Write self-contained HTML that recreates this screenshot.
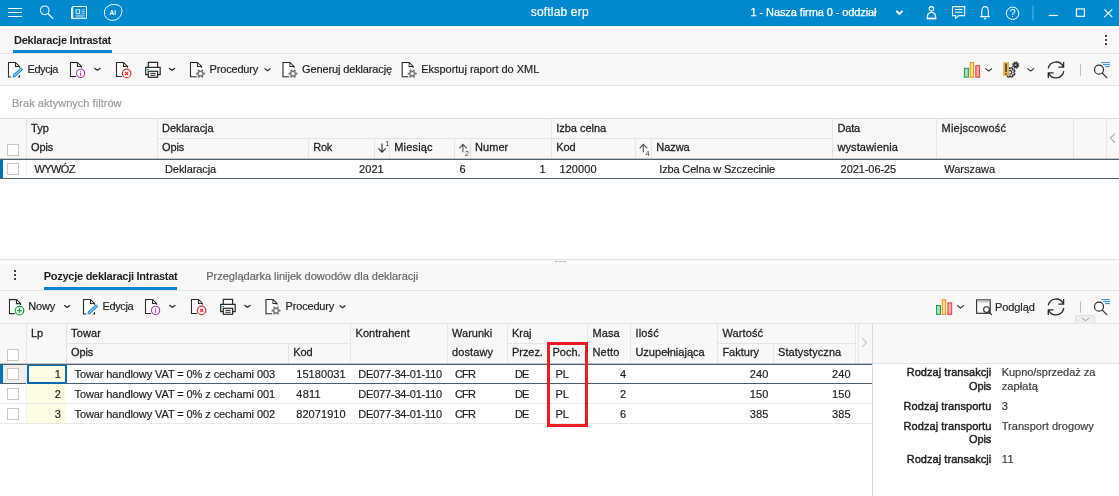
<!DOCTYPE html>
<html lang="pl"><head><meta charset="utf-8"><title>softlab erp</title>
<style>
html,body{margin:0;padding:0}
body{width:1119px;height:496px;overflow:hidden;background:#fff;position:relative;font-family:"Liberation Sans", sans-serif;color:#1e1e1e}
.b{position:absolute;box-sizing:border-box}
.t{position:absolute;white-space:pre;font-family:"Liberation Sans", sans-serif}
svg{position:absolute;overflow:visible}
.cb{position:absolute;box-sizing:border-box;width:12px;height:12px;border:1px solid #c6c6c6;background:#fff}
</style></head><body>
<div class="b" style="left:0px;top:0px;width:1119px;height:26px;background:#0089cf;"></div>
<div class="b" style="left:0px;top:26px;width:1119px;height:27px;background:#f9f8f7;"></div>
<div class="b" style="left:0px;top:53px;width:1119px;height:1px;background:#e4e3e2;"></div>
<div class="b" style="left:0px;top:54px;width:1119px;height:31px;background:#f9f8f7;"></div>
<div class="b" style="left:0px;top:85px;width:1119px;height:1px;background:#e4e3e2;"></div>
<div class="b" style="left:0px;top:118px;width:1119px;height:1px;background:#dddcdb;"></div>
<div class="b" style="left:0px;top:119px;width:1119px;height:39px;background:#f9f8f7;"></div>
<div class="b" style="left:13px;top:50px;width:99px;height:3px;background:#0a84d2;"></div>
<div class="b" style="left:1105px;top:35px;width:2px;height:2px;background:#444;"></div>
<div class="b" style="left:1105px;top:39px;width:2px;height:2px;background:#444;"></div>
<div class="b" style="left:1105px;top:43px;width:2px;height:2px;background:#444;"></div>
<div class="b" style="left:26px;top:119px;width:1px;height:39px;background:#e6e5e4;"></div>
<div class="b" style="left:157px;top:119px;width:1px;height:39px;background:#e6e5e4;"></div>
<div class="b" style="left:551px;top:119px;width:1px;height:39px;background:#e6e5e4;"></div>
<div class="b" style="left:832px;top:119px;width:1px;height:39px;background:#e6e5e4;"></div>
<div class="b" style="left:936px;top:119px;width:1px;height:39px;background:#e6e5e4;"></div>
<div class="b" style="left:1073px;top:119px;width:1px;height:39px;background:#e6e5e4;"></div>
<div class="b" style="left:1106px;top:119px;width:1px;height:39px;background:#e6e5e4;"></div>
<div class="b" style="left:308px;top:139px;width:1px;height:19px;background:#e6e5e4;"></div>
<div class="b" style="left:374px;top:139px;width:1px;height:19px;background:#e6e5e4;"></div>
<div class="b" style="left:389px;top:139px;width:1px;height:19px;background:#e6e5e4;"></div>
<div class="b" style="left:454px;top:139px;width:1px;height:19px;background:#e6e5e4;"></div>
<div class="b" style="left:470px;top:139px;width:1px;height:19px;background:#e6e5e4;"></div>
<div class="b" style="left:635px;top:139px;width:1px;height:19px;background:#e6e5e4;"></div>
<div class="b" style="left:651px;top:139px;width:1px;height:19px;background:#e6e5e4;"></div>
<div class="b" style="left:157px;top:138px;width:675px;height:1px;background:#e6e5e4;"></div>
<div class="cb" style="left:7px;top:144px"></div>
<div class="b" style="left:0px;top:158px;width:1119px;height:1px;background:#c3c7ca;"></div>
<div class="b" style="left:0px;top:159px;width:1119px;height:1px;background:#4b606c;"></div>
<div class="b" style="left:0px;top:178px;width:1119px;height:1px;background:#4b606c;"></div>
<div class="b" style="left:0px;top:160px;width:3px;height:18px;background:#0072b5;"></div>
<div class="b" style="left:26px;top:160px;width:1px;height:18px;background:#eeeeee;"></div>
<div class="cb" style="left:7px;top:163px"></div>
<div class="b" style="left:0px;top:259px;width:1119px;height:1px;background:#e4e3e2;"></div>
<div class="b" style="left:0px;top:260px;width:1119px;height:30px;background:#f9f8f7;"></div>
<div class="b" style="left:0px;top:290px;width:1119px;height:1px;background:#e4e3e2;"></div>
<div class="b" style="left:0px;top:291px;width:1119px;height:32px;background:#f9f8f7;"></div>
<div class="b" style="left:0px;top:323px;width:1119px;height:1px;background:#e4e3e2;"></div>
<div class="b" style="left:0px;top:324px;width:1119px;height:39px;background:#f9f8f7;"></div>
<div class="b" style="left:873px;top:363px;width:246px;height:1px;background:#e4e3e2;"></div>
<div class="b" style="left:872px;top:324px;width:1px;height:172px;background:#dcdbda;"></div>
<div class="b" style="left:858px;top:324px;width:1px;height:39px;background:#e6e5e4;"></div>
<div class="b" style="left:14px;top:270px;width:2px;height:2px;background:#444;"></div>
<div class="b" style="left:14px;top:274px;width:2px;height:2px;background:#444;"></div>
<div class="b" style="left:14px;top:278px;width:2px;height:2px;background:#444;"></div>
<div class="b" style="left:44px;top:287px;width:133px;height:3px;background:#0a84d2;"></div>
<div class="b" style="left:26px;top:324px;width:1px;height:39px;background:#e6e5e4;"></div>
<div class="b" style="left:66px;top:324px;width:1px;height:39px;background:#e6e5e4;"></div>
<div class="b" style="left:350px;top:324px;width:1px;height:39px;background:#e6e5e4;"></div>
<div class="b" style="left:447px;top:324px;width:1px;height:39px;background:#e6e5e4;"></div>
<div class="b" style="left:507px;top:324px;width:1px;height:39px;background:#e6e5e4;"></div>
<div class="b" style="left:587px;top:324px;width:1px;height:39px;background:#e6e5e4;"></div>
<div class="b" style="left:630px;top:324px;width:1px;height:39px;background:#e6e5e4;"></div>
<div class="b" style="left:717px;top:324px;width:1px;height:39px;background:#e6e5e4;"></div>
<div class="b" style="left:855px;top:324px;width:1px;height:39px;background:#e6e5e4;"></div>
<div class="b" style="left:288px;top:344px;width:1px;height:19px;background:#e6e5e4;"></div>
<div class="b" style="left:547px;top:344px;width:1px;height:19px;background:#e6e5e4;"></div>
<div class="b" style="left:773px;top:344px;width:1px;height:19px;background:#e6e5e4;"></div>
<div class="b" style="left:66px;top:343px;width:284px;height:1px;background:#e6e5e4;"></div>
<div class="b" style="left:507px;top:343px;width:80px;height:1px;background:#e6e5e4;"></div>
<div class="b" style="left:717px;top:343px;width:138px;height:1px;background:#e6e5e4;"></div>
<div class="cb" style="left:7px;top:349px"></div>
<div class="b" style="left:0px;top:363px;width:872px;height:1px;background:#c3c7ca;"></div>
<div class="b" style="left:0px;top:364px;width:872px;height:1px;background:#4b606c;"></div>
<div class="b" style="left:0px;top:383px;width:872px;height:1px;background:#4b606c;"></div>
<div class="b" style="left:0px;top:365px;width:3px;height:18px;background:#0072b5;"></div>
<div class="b" style="left:3px;top:365px;width:23px;height:18px;background:#efeeed;"></div>
<div class="b" style="left:27px;top:365px;width:40px;height:19px;background:#fdfde4;border:2px solid #0a6cb0;border-top-width:1px;"></div>
<div class="b" style="left:27px;top:384px;width:40px;height:19px;background:#fdfde4;"></div>
<div class="b" style="left:27px;top:404px;width:40px;height:19px;background:#fdfde4;"></div>
<div class="b" style="left:0px;top:403px;width:872px;height:1px;background:#e9e9e9;"></div>
<div class="b" style="left:0px;top:423px;width:872px;height:1px;background:#e9e9e9;"></div>
<div class="b" style="left:26px;top:365px;width:1px;height:58px;background:#eeeeee;"></div>
<div class="cb" style="left:7px;top:368px"></div>
<div class="cb" style="left:7px;top:388px"></div>
<div class="cb" style="left:7px;top:408px"></div>
<div class="b" style="left:547px;top:342px;width:41px;height:85px;border:3px solid #ec1c24;"></div>
<svg width="1119" height="496" viewBox="0 0 1119 496" style="left:0;top:0;will-change:transform"><path d="M8,8.5 H22" stroke="#fff" stroke-width="1"/>
<path d="M8,12.5 H22" stroke="#fff" stroke-width="1"/>
<path d="M8,16.5 H22" stroke="#fff" stroke-width="1"/>
<circle cx="44.7" cy="10.3" r="4.3" fill="none" stroke="#fff" stroke-width="1.1"/><path d="M47.8,13.5 L52.8,18.4" stroke="#fff" stroke-width="1.1" stroke-linecap="round"/>
<path d="M72.7,6.5 H86.5 V18.3 H71.5 V7.8 H72.7 M72.7,6.5 V18.3" fill="none" stroke="#fff" stroke-width="1"/>
<rect x="76" y="9.8" width="3.7" height="3.5" fill="none" stroke="#fff" stroke-width="0.8"/>
<path d="M81.4,9.9 h3.4 M81.4,11.6 h3.4 M81.4,13.3 h3.4 M75.6,15.25 h9.2 M75.6,16.85 h9.2" stroke="#fff" stroke-width="0.6"/>
<path d="M104.4,12.8 C104.2,7.8 108.5,4.6 113.6,4.5 C118.6,4.4 121.8,6.5 121.9,10.4 C122,15.6 118,20.4 112.6,20.4 C107.6,20.4 104.5,17.2 104.4,12.8 Z" fill="none" stroke="#fff" stroke-width="1"/>
<text x="112.8" y="14.6" text-anchor="middle" font-family="Liberation Sans, sans-serif" font-size="6.6" font-weight="700" fill="#fff">Ai</text>
<path d="M896.3,10.9 l3.1,3.1 l3.1,-3.1" fill="none" stroke="#fff" stroke-width="1.9" stroke-linejoin="miter"/>
<circle cx="931.4" cy="8.8" r="2.2" fill="none" stroke="#fff" stroke-width="1.1"/>
<path d="M927.2,18.2 C927.2,14.2 929,12.4 931.4,12.4 C933.8,12.4 935.8,14.2 935.8,18.2 Z" fill="none" stroke="#fff" stroke-width="1.1"/><path d="M926.8,18.6 H936.2" stroke="#fff" stroke-width="1.6"/>
<path d="M952.5,6.6 H964.7 V15.6 H958.8 L955.6,18.4 V15.6 H952.5 Z" fill="none" stroke="#fff" stroke-width="1.1" stroke-linejoin="miter"/><path d="M955,9.5 h7.4 M955,12.2 h7.4" stroke="#fff" stroke-width="1"/>
<path d="M980.2,16.6 H989.9 M981.8,16.6 V11.2 C981.8,8.2 983.2,6.6 985,6.6 C986.9,6.6 988.3,8.2 988.3,11.2 V16.6" fill="none" stroke="#fff" stroke-width="1.1"/><path d="M984.1,18.6 h1.9" stroke="#fff" stroke-width="1.1"/>
<circle cx="1012.6" cy="13.3" r="6.2" fill="none" stroke="#fff" stroke-width="1"/>
<text x="1012.6" y="17.1" text-anchor="middle" font-family="Liberation Sans, sans-serif" font-size="10.5" fill="#fff">?</text>
<path d="M1033,5.5 V20.5" stroke="#5cb5e3" stroke-width="1"/>
<path d="M1048.7,15.5 H1058" stroke="#fff" stroke-width="1.1"/>
<rect x="1076.4" y="8.9" width="8" height="7.4" fill="none" stroke="#fff" stroke-width="1.1"/>
<path d="M1104.3,9.4 l8,7.8 M1112.3,9.4 l-8,7.8" stroke="#fff" stroke-width="1.1"/>
<path d="M8.5,77.0 V62.5 H15.5 L19.5,66.5 V77.0 Z" fill="#fff"/>
<path d="M11.1,77.0 H8.5 V62.5 H15.5 L19.5,66.5 V67.7 M15.5,62.5 V66.5 H19.5 M17.8,77.0 H19.5 V75.0" fill="none" stroke="#2b2b2b" stroke-width="1.1"/>
<path d="M16.0,63.7 V66.0 H18.3 Z" fill="#e6e6e6"/>
<path d="M13.7,76.2 L22.1,68.4" stroke="#2a8fd8" stroke-width="3.3" stroke-linecap="butt"/>
<path d="M14.1,75.8 L21.7,68.8" stroke="#eaf4fc" stroke-width="0.8"/>
<path d="M12.4,77.6 l0.6,-2.6 l2.2,2.0 Z" fill="#2a8fd8"/>
<path d="M70.5,76.5 V62.5 H77.5 L81.5,66.5 V76.5 Z" fill="#fff"/>
<path d="M76.1,76.5 H70.5 V62.5 H77.5 L81.5,66.5 V67.8 M77.5,62.5 V66.5 H81.5" fill="none" stroke="#2b2b2b" stroke-width="1.1" stroke-linejoin="miter"/>
<path d="M78.0,63.7 V66.0 H80.3 Z" fill="#e6e6e6"/>
<circle cx="80.6" cy="73.4" r="4.1" fill="#fff" stroke="#a23aa8" stroke-width="1.1"/>
<path d="M80.6,72.5 V75.80000000000001" stroke="#a23aa8" stroke-width="1.1"/><circle cx="80.6" cy="71.30000000000001" r="0.65" fill="#a23aa8"/>
<path d="M94.85,68.44999999999999 l2.6,1.9 l2.6,-1.9" fill="none" stroke="#2b2b2b" stroke-width="1.25" stroke-linecap="round" stroke-linejoin="round"/>
<path d="M116.5,76.5 V62.5 H123.5 L127.5,66.5 V76.5 Z" fill="#fff"/>
<path d="M122.1,76.5 H116.5 V62.5 H123.5 L127.5,66.5 V67.8 M123.5,62.5 V66.5 H127.5" fill="none" stroke="#2b2b2b" stroke-width="1.1" stroke-linejoin="miter"/>
<path d="M124.0,63.7 V66.0 H126.3 Z" fill="#e6e6e6"/>
<circle cx="126.6" cy="73.4" r="4.2" fill="#fff" stroke="#e8333a" stroke-width="1.2"/>
<path d="M125.0,71.80000000000001 l3.2,3.2 M128.2,71.80000000000001 l-3.2,3.2" stroke="#e8333a" stroke-width="1.2"/>
<path d="M148.29999999999998,67.4 V62.4 H157.6 V67.4" fill="none" stroke="#2b2b2b" stroke-width="1.2"/>
<path d="M148.29999999999998,74.6 H145.7 V67.4 H160.2 V74.6 H157.6" fill="none" stroke="#2b2b2b" stroke-width="1.2"/>
<rect x="148.29999999999998" y="71.3" width="9.3" height="6" fill="none" stroke="#2b2b2b" stroke-width="1.2"/>
<path d="M150.39999999999998,73.4 h5.2 M150.39999999999998,75.3 h5.2" stroke="#2b2b2b" stroke-width="1"/>
<path d="M147.0,69.5 h1.9" stroke="#1a86d8" stroke-width="1.1"/>
<path d="M169.45000000000002,68.44999999999999 l2.6,1.9 l2.6,-1.9" fill="none" stroke="#2b2b2b" stroke-width="1.25" stroke-linecap="round" stroke-linejoin="round"/>
<path d="M190.5,76.7 V62.5 H197.5 L201.5,66.5 V76.7 Z" fill="#fff"/>
<path d="M196.7,76.7 H190.5 V62.5 H197.5 L201.5,66.5 V67.8 M197.5,62.5 V66.5 H201.5" fill="none" stroke="#2b2b2b" stroke-width="1.1" stroke-linejoin="miter"/>
<path d="M198.0,63.7 V66.0 H200.3 Z" fill="#e6e6e6"/>
<circle cx="200.5" cy="73.6" r="3.6" fill="#f9f8f7"/>
<polygon points="203.17,72.47 204.85,72.94 204.85,74.26 203.17,74.73 202.81,75.35 203.24,77.04 202.11,77.70 200.86,76.48 200.14,76.48 198.89,77.70 197.76,77.04 198.19,75.35 197.83,74.73 196.15,74.26 196.15,72.94 197.83,72.47 198.19,71.85 197.76,70.16 198.89,69.50 200.14,70.72 200.86,70.72 202.11,69.50 203.24,70.16 202.81,71.85" fill="#7b7b7b" stroke="#7b7b7b" stroke-width="0.3" stroke-linejoin="round"/>
<circle cx="200.5" cy="73.6" r="1.65" fill="#fff"/>
<path d="M264.95,68.75 l2.6,1.9 l2.6,-1.9" fill="none" stroke="#2b2b2b" stroke-width="1.25" stroke-linecap="round" stroke-linejoin="round"/>
<path d="M283,76.7 V62.5 H290 L294,66.5 V76.7 Z" fill="#fff"/>
<path d="M289.2,76.7 H283 V62.5 H290 L294,66.5 V67.8 M290,62.5 V66.5 H294" fill="none" stroke="#2b2b2b" stroke-width="1.1" stroke-linejoin="miter"/>
<path d="M290.5,63.7 V66.0 H292.8 Z" fill="#e6e6e6"/>
<circle cx="293.0" cy="73.6" r="3.6" fill="#f9f8f7"/>
<polygon points="295.67,72.47 297.35,72.94 297.35,74.26 295.67,74.73 295.31,75.35 295.74,77.04 294.61,77.70 293.36,76.48 292.64,76.48 291.39,77.70 290.26,77.04 290.69,75.35 290.33,74.73 288.65,74.26 288.65,72.94 290.33,72.47 290.69,71.85 290.26,70.16 291.39,69.50 292.64,70.72 293.36,70.72 294.61,69.50 295.74,70.16 295.31,71.85" fill="#7b7b7b" stroke="#7b7b7b" stroke-width="0.3" stroke-linejoin="round"/>
<circle cx="293.0" cy="73.6" r="1.65" fill="#fff"/>
<path d="M402.2,76.7 V62.5 H409.2 L413.2,66.5 V76.7 Z" fill="#fff"/>
<path d="M408.4,76.7 H402.2 V62.5 H409.2 L413.2,66.5 V67.8 M409.2,62.5 V66.5 H413.2" fill="none" stroke="#2b2b2b" stroke-width="1.1" stroke-linejoin="miter"/>
<path d="M409.7,63.7 V66.0 H412.0 Z" fill="#e6e6e6"/>
<circle cx="412.2" cy="73.6" r="3.6" fill="#f9f8f7"/>
<polygon points="414.87,72.47 416.55,72.94 416.55,74.26 414.87,74.73 414.51,75.35 414.94,77.04 413.81,77.70 412.56,76.48 411.84,76.48 410.59,77.70 409.46,77.04 409.89,75.35 409.53,74.73 407.85,74.26 407.85,72.94 409.53,72.47 409.89,71.85 409.46,70.16 410.59,69.50 411.84,70.72 412.56,70.72 413.81,69.50 414.94,70.16 414.51,71.85" fill="#7b7b7b" stroke="#7b7b7b" stroke-width="0.3" stroke-linejoin="round"/>
<circle cx="412.2" cy="73.6" r="1.65" fill="#fff"/>
<rect x="964.4" y="68.3" width="4" height="8.900000000000002" fill="#a8dcb2" stroke="#1fa04a" stroke-width="1"/>
<rect x="970.1999999999999" y="62.6" width="3.4" height="14.600000000000001" fill="#fbe48a" stroke="#f08a2a" stroke-width="1"/>
<rect x="975.8" y="65.7" width="3.8" height="11.500000000000002" fill="#f6aaaa" stroke="#e83a3a" stroke-width="1"/>
<path d="M985.65,68.55 l3.0,2.5 l3.0,-2.5" fill="none" stroke="#2b2b2b" stroke-width="1.1" stroke-linecap="round" stroke-linejoin="round"/>
<polygon points="1017.98,65.42 1019.02,65.84 1018.58,66.91 1017.54,66.47 1017.08,66.94 1017.52,67.97 1016.46,68.41 1016.03,67.38 1015.38,67.38 1014.96,68.42 1013.89,67.98 1014.33,66.94 1013.86,66.48 1012.83,66.92 1012.39,65.86 1013.42,65.43 1013.42,64.78 1012.38,64.36 1012.82,63.29 1013.86,63.73 1014.32,63.26 1013.88,62.23 1014.94,61.79 1015.37,62.82 1016.02,62.82 1016.44,61.78 1017.51,62.22 1017.07,63.26 1017.54,63.72 1018.57,63.28 1019.01,64.34 1017.98,64.77" fill="#333" stroke="#333" stroke-width="0.5" stroke-linejoin="round"/>
<circle cx="1015.7" cy="65.1" r="1.0" fill="#f9f8f7" stroke="#333" stroke-width="0.5"/>
<polygon points="1013.78,72.82 1014.99,73.44 1014.31,75.10 1013.01,74.68 1012.40,75.30 1012.82,76.59 1011.17,77.28 1010.54,76.07 1009.68,76.08 1009.06,77.29 1007.40,76.61 1007.82,75.31 1007.20,74.70 1005.91,75.12 1005.22,73.47 1006.43,72.84 1006.42,71.98 1005.21,71.36 1005.89,69.70 1007.19,70.12 1007.80,69.50 1007.38,68.21 1009.03,67.52 1009.66,68.73 1010.52,68.72 1011.14,67.51 1012.80,68.19 1012.38,69.49 1013.00,70.10 1014.29,69.68 1014.98,71.33 1013.77,71.96" fill="#f9f8f7" stroke="#2e2e2e" stroke-width="1.15" stroke-linejoin="round"/>
<circle cx="1010.1" cy="72.4" r="1.8" fill="#f9f8f7" stroke="#2e2e2e" stroke-width="1.15"/>
<rect x="1003" y="62.1" width="6" height="13.6" fill="#e9b552"/>
<path d="M1006,63.5 V72" stroke="#333" stroke-width="1.5"/><rect x="1005.25" y="73.2" width="1.5" height="1.5" fill="#333"/>
<path d="M1027.6499999999999,68.55 l3.0,2.5 l3.0,-2.5" fill="none" stroke="#2b2b2b" stroke-width="1.1" stroke-linecap="round" stroke-linejoin="round"/>
<path d="M1048.25,68.5 A7.9,7.9 0 0 1 1063.45,67.2 M1063.6,62.10000000000001 V67.2 H1058.4" fill="none" stroke="#2b2b2b" stroke-width="1.3"/>
<path d="M1063.75,71.10000000000001 A7.9,7.9 0 0 1 1048.55,72.80000000000001 M1048.3,77.9 V72.80000000000001 H1053.5" fill="none" stroke="#2b2b2b" stroke-width="1.3"/>
<path d="M1080.5,64.3 V75.7" stroke="#bcbcbc" stroke-width="1"/>
<circle cx="1099" cy="69.7" r="4.5" fill="none" stroke="#2b2b2b" stroke-width="1.2"/>
<path d="M1102.3,73.10000000000001 L1106.8,77.7" stroke="#2b2b2b" stroke-width="1.2" stroke-linecap="round"/>
<path d="M1101.1,62.6 H1109.9" stroke="#2a8fd8" stroke-width="1"/>
<path d="M1103.2,64.6 H1109.9" stroke="#2a8fd8" stroke-width="1"/>
<path d="M1105.1,66.6 H1109.9" stroke="#2a8fd8" stroke-width="1"/>
<path d="M9.5,313.6 V299.6 H16.5 L20.5,303.6 V313.6 Z" fill="#fff"/>
<path d="M14.7,313.6 H9.5 V299.6 H16.5 L20.5,303.6 V304.90000000000003 M16.5,299.6 V303.6 H20.5" fill="none" stroke="#2b2b2b" stroke-width="1.1" stroke-linejoin="miter"/>
<path d="M17.0,300.8 V303.1 H19.3 Z" fill="#e6e6e6"/>
<circle cx="19.5" cy="310.6" r="4.3" fill="#fff" stroke="#1fa74a" stroke-width="1.2"/>
<path d="M17.1,310.6 h4.8 M19.5,308.20000000000005 v4.8" stroke="#1fa74a" stroke-width="1.2"/>
<path d="M64.55,305.55 l2.6,1.9 l2.6,-1.9" fill="none" stroke="#2b2b2b" stroke-width="1.25" stroke-linecap="round" stroke-linejoin="round"/>
<path d="M83.5,314.0 V299.5 H90.5 L94.5,303.5 V314.0 Z" fill="#fff"/>
<path d="M86.1,314.0 H83.5 V299.5 H90.5 L94.5,303.5 V304.7 M90.5,299.5 V303.5 H94.5 M92.8,314.0 H94.5 V312.0" fill="none" stroke="#2b2b2b" stroke-width="1.1"/>
<path d="M91.0,300.7 V303.0 H93.3 Z" fill="#e6e6e6"/>
<path d="M88.7,313.2 L97.1,305.4" stroke="#2a8fd8" stroke-width="3.3" stroke-linecap="butt"/>
<path d="M89.1,312.8 L96.7,305.8" stroke="#eaf4fc" stroke-width="0.8"/>
<path d="M87.4,314.6 l0.6,-2.6 l2.2,2.0 Z" fill="#2a8fd8"/>
<path d="M145.5,313.5 V299.5 H152.5 L156.5,303.5 V313.5 Z" fill="#fff"/>
<path d="M151.1,313.5 H145.5 V299.5 H152.5 L156.5,303.5 V304.8 M152.5,299.5 V303.5 H156.5" fill="none" stroke="#2b2b2b" stroke-width="1.1" stroke-linejoin="miter"/>
<path d="M153.0,300.7 V303.0 H155.3 Z" fill="#e6e6e6"/>
<circle cx="155.6" cy="310.4" r="4.1" fill="#fff" stroke="#a23aa8" stroke-width="1.1"/>
<path d="M155.6,309.5 V312.79999999999995" stroke="#a23aa8" stroke-width="1.1"/><circle cx="155.6" cy="308.29999999999995" r="0.65" fill="#a23aa8"/>
<path d="M169.75,305.45000000000005 l2.6,1.9 l2.6,-1.9" fill="none" stroke="#2b2b2b" stroke-width="1.25" stroke-linecap="round" stroke-linejoin="round"/>
<path d="M191.5,313.5 V299.5 H198.5 L202.5,303.5 V313.5 Z" fill="#fff"/>
<path d="M197.1,313.5 H191.5 V299.5 H198.5 L202.5,303.5 V304.8 M198.5,299.5 V303.5 H202.5" fill="none" stroke="#2b2b2b" stroke-width="1.1" stroke-linejoin="miter"/>
<path d="M199.0,300.7 V303.0 H201.3 Z" fill="#e6e6e6"/>
<circle cx="201.6" cy="310.4" r="4.2" fill="#fff" stroke="#e8333a" stroke-width="1.2"/>
<path d="M200.0,308.79999999999995 l3.2,3.2 M203.2,308.79999999999995 l-3.2,3.2" stroke="#e8333a" stroke-width="1.2"/>
<path d="M223.29999999999998,304.4 V299.4 H232.6 V304.4" fill="none" stroke="#2b2b2b" stroke-width="1.2"/>
<path d="M223.29999999999998,311.59999999999997 H220.7 V304.4 H235.2 V311.59999999999997 H232.6" fill="none" stroke="#2b2b2b" stroke-width="1.2"/>
<rect x="223.29999999999998" y="308.29999999999995" width="9.3" height="6" fill="none" stroke="#2b2b2b" stroke-width="1.2"/>
<path d="M225.39999999999998,310.4 h5.2 M225.39999999999998,312.29999999999995 h5.2" stroke="#2b2b2b" stroke-width="1"/>
<path d="M222.0,306.5 h1.9" stroke="#1a86d8" stroke-width="1.1"/>
<path d="M244.85000000000002,305.45000000000005 l2.6,1.9 l2.6,-1.9" fill="none" stroke="#2b2b2b" stroke-width="1.25" stroke-linecap="round" stroke-linejoin="round"/>
<path d="M266,313.7 V299.5 H273 L277,303.5 V313.7 Z" fill="#fff"/>
<path d="M272.2,313.7 H266 V299.5 H273 L277,303.5 V304.8 M273,299.5 V303.5 H277" fill="none" stroke="#2b2b2b" stroke-width="1.1" stroke-linejoin="miter"/>
<path d="M273.5,300.7 V303.0 H275.8 Z" fill="#e6e6e6"/>
<circle cx="276.0" cy="310.6" r="3.6" fill="#f9f8f7"/>
<polygon points="278.67,309.47 280.35,309.94 280.35,311.26 278.67,311.73 278.31,312.35 278.74,314.04 277.61,314.70 276.36,313.48 275.64,313.48 274.39,314.70 273.26,314.04 273.69,312.35 273.33,311.73 271.65,311.26 271.65,309.94 273.33,309.47 273.69,308.85 273.26,307.16 274.39,306.50 275.64,307.72 276.36,307.72 277.61,306.50 278.74,307.16 278.31,308.85" fill="#7b7b7b" stroke="#7b7b7b" stroke-width="0.3" stroke-linejoin="round"/>
<circle cx="276.0" cy="310.6" r="1.65" fill="#fff"/>
<path d="M339.95,305.75 l2.6,1.9 l2.6,-1.9" fill="none" stroke="#2b2b2b" stroke-width="1.25" stroke-linecap="round" stroke-linejoin="round"/>
<rect x="936.5" y="305.5" width="4" height="8.900000000000023" fill="#a8dcb2" stroke="#1fa04a" stroke-width="1"/>
<rect x="942.3" y="299.8" width="3.4" height="14.600000000000023" fill="#fbe48a" stroke="#f08a2a" stroke-width="1"/>
<rect x="947.9" y="302.90000000000003" width="3.8" height="11.500000000000023" fill="#f6aaaa" stroke="#e83a3a" stroke-width="1"/>
<path d="M957.55,305.55 l3.0,2.5 l3.0,-2.5" fill="none" stroke="#2b2b2b" stroke-width="1.1" stroke-linecap="round" stroke-linejoin="round"/>
<rect x="976.6" y="299.9" width="13.6" height="13.4" fill="none" stroke="#2b2b2b" stroke-width="1.1"/><rect x="977.2" y="300.5" width="12.4" height="1.9" fill="#c9c9c9"/>
<circle cx="986.5" cy="309.6" r="2.9" fill="#f9f8f7" stroke="#2b2b2b" stroke-width="1.1"/><path d="M988.6,311.8 L991.6,314.6" stroke="#2b2b2b" stroke-width="1.2" stroke-linecap="round"/>
<path d="M1048.25,305.5 A7.9,7.9 0 0 1 1063.45,304.2 M1063.6,299.09999999999997 V304.2 H1058.4" fill="none" stroke="#2b2b2b" stroke-width="1.3"/>
<path d="M1063.75,308.09999999999997 A7.9,7.9 0 0 1 1048.55,309.79999999999995 M1048.3,314.9 V309.79999999999995 H1053.5" fill="none" stroke="#2b2b2b" stroke-width="1.3"/>
<path d="M1080.5,301.3 V312.7" stroke="#bcbcbc" stroke-width="1"/>
<circle cx="1099" cy="306.7" r="4.5" fill="none" stroke="#2b2b2b" stroke-width="1.2"/>
<path d="M1102.3,310.09999999999997 L1106.8,314.7" stroke="#2b2b2b" stroke-width="1.2" stroke-linecap="round"/>
<path d="M1101.1,299.59999999999997 H1109.9" stroke="#2a8fd8" stroke-width="1"/>
<path d="M1103.2,301.59999999999997 H1109.9" stroke="#2a8fd8" stroke-width="1"/>
<path d="M1105.1,303.59999999999997 H1109.9" stroke="#2a8fd8" stroke-width="1"/>
<path d="M1075.5,323.5 V317 Q1075.5,315.5 1077,315.5 H1093 Q1094.5,315.5 1094.5,317 V323.5" fill="#efefef" stroke="#dcdcdc" stroke-width="1"/>
<path d="M1082.05,318.15000000000003 l3.5,2.6 l3.5,-2.6" fill="none" stroke="#999" stroke-width="1.0" stroke-linecap="round" stroke-linejoin="round"/>
<path d="M382,143.4 V152.20000000000002 M378.4,148.3 L382,152.20000000000002 L385.7,148.3" fill="none" stroke="#333" stroke-width="1.1"/>
<text x="385.3" y="145.8" font-family="Liberation Sans, sans-serif" font-size="7.2" fill="#333">1</text>
<path d="M462.9,144.4 V152.20000000000002 M459.29999999999995,148.3 L462.9,144.4 L466.79999999999995,148.3" fill="none" stroke="#555" stroke-width="1.1"/>
<text x="465.09999999999997" y="155.5" font-family="Liberation Sans, sans-serif" font-size="7.2" fill="#333">2</text>
<path d="M643.3,144.4 V152.20000000000002 M639.6999999999999,148.3 L643.3,144.4 L647.1999999999999,148.3" fill="none" stroke="#555" stroke-width="1.1"/>
<text x="645.5" y="155.5" font-family="Liberation Sans, sans-serif" font-size="7.2" fill="#333">4</text>
<path d="M1115,133.6 L1110.3,138.1 L1115,142.6" fill="none" stroke="#adadad" stroke-width="1.1"/>
<path d="M862.3,338.4 L866.6,342.5 L862.3,346.6" fill="none" stroke="#c4c4c4" stroke-width="1.1"/>
<rect x="555" y="261" width="3" height="1" fill="#b8b8b8"/>
<rect x="559" y="261" width="3" height="1" fill="#b8b8b8"/>
<rect x="563" y="261" width="3" height="1" fill="#b8b8b8"/></svg>
<div id="txt" style="position:absolute;left:0;top:0;width:1119px;height:496px;will-change:transform">
<span class="t" style="left:530.75px;top:5.34px;font-size:12px;line-height:15px;color:#fff;letter-spacing:0.178px;-webkit-text-stroke:0.18px currentColor;">softlab erp</span>
<span class="t" style="left:750.50px;top:4.69px;font-size:11px;line-height:14px;color:#fff;letter-spacing:-0.089px;-webkit-text-stroke:0.25px currentColor;">1 - Nasza firma 0 - oddział</span>
<span class="t" style="left:14.00px;top:33.19px;font-size:11px;line-height:14px;font-weight:700;letter-spacing:-0.225px;">Deklaracje Intrastat</span>
<span class="t" style="left:27.50px;top:61.69px;font-size:11px;line-height:14px;letter-spacing:-0.422px;-webkit-text-stroke:0.18px currentColor;">Edycja</span>
<span class="t" style="left:209.60px;top:61.69px;font-size:11px;line-height:14px;letter-spacing:-0.182px;-webkit-text-stroke:0.18px currentColor;">Procedury</span>
<span class="t" style="left:302.00px;top:61.69px;font-size:11px;line-height:14px;letter-spacing:-0.13px;-webkit-text-stroke:0.18px currentColor;">Generuj deklarację</span>
<span class="t" style="left:421.25px;top:61.69px;font-size:11px;line-height:14px;letter-spacing:-0.027px;-webkit-text-stroke:0.18px currentColor;">Eksportuj raport do XML</span>
<span class="t" style="left:12.00px;top:95.69px;font-size:11px;line-height:14px;color:#9a9a9a;letter-spacing:0.035px;-webkit-text-stroke:0.18px currentColor;">Brak aktywnych filtrów</span>
<span class="t" style="left:31.00px;top:121.19px;font-size:11px;line-height:14px;letter-spacing:0.047px;-webkit-text-stroke:0.26px currentColor;">Typ</span>
<span class="t" style="left:31.00px;top:139.94px;font-size:11px;line-height:14px;letter-spacing:-0.098px;-webkit-text-stroke:0.26px currentColor;">Opis</span>
<span class="t" style="left:162.00px;top:121.19px;font-size:11px;line-height:14px;letter-spacing:-0.036px;-webkit-text-stroke:0.26px currentColor;">Deklaracja</span>
<span class="t" style="left:162.00px;top:139.94px;font-size:11px;line-height:14px;letter-spacing:-0.098px;-webkit-text-stroke:0.26px currentColor;">Opis</span>
<span class="t" style="left:313.25px;top:139.94px;font-size:11px;line-height:14px;letter-spacing:-0.219px;-webkit-text-stroke:0.26px currentColor;">Rok</span>
<span class="t" style="left:394.25px;top:139.94px;font-size:11px;line-height:14px;letter-spacing:0.165px;-webkit-text-stroke:0.26px currentColor;">Miesiąc</span>
<span class="t" style="left:475.00px;top:139.94px;font-size:11px;line-height:14px;letter-spacing:0.056px;-webkit-text-stroke:0.26px currentColor;">Numer</span>
<span class="t" style="left:556.25px;top:121.19px;font-size:11px;line-height:14px;letter-spacing:-0.017px;-webkit-text-stroke:0.26px currentColor;">Izba celna</span>
<span class="t" style="left:556.25px;top:139.94px;font-size:11px;line-height:14px;letter-spacing:-0.109px;-webkit-text-stroke:0.26px currentColor;">Kod</span>
<span class="t" style="left:656.25px;top:139.94px;font-size:11px;line-height:14px;letter-spacing:-0.05px;-webkit-text-stroke:0.26px currentColor;">Nazwa</span>
<span class="t" style="left:837.40px;top:121.19px;font-size:11px;line-height:14px;letter-spacing:-0.133px;-webkit-text-stroke:0.26px currentColor;">Data</span>
<span class="t" style="left:837.40px;top:139.94px;font-size:11px;line-height:14px;letter-spacing:0.111px;-webkit-text-stroke:0.26px currentColor;">wystawienia</span>
<span class="t" style="left:941.60px;top:121.19px;font-size:11px;line-height:14px;letter-spacing:0.197px;-webkit-text-stroke:0.26px currentColor;">Miejscowość</span>
<span class="t" style="left:34.50px;top:161.94px;font-size:11px;line-height:14px;letter-spacing:-0.625px;-webkit-text-stroke:0.18px currentColor;">WYWÓZ</span>
<span class="t" style="left:165.00px;top:161.94px;font-size:11px;line-height:14px;letter-spacing:-0.081px;-webkit-text-stroke:0.18px currentColor;">Deklaracja</span>
<span class="t" style="left:359.08px;top:161.94px;font-size:11px;line-height:14px;letter-spacing:0.062px;-webkit-text-stroke:0.18px currentColor;">2021</span>
<span class="t" style="left:459.38px;top:161.94px;font-size:11px;line-height:14px;letter-spacing:0.062px;-webkit-text-stroke:0.18px currentColor;">6</span>
<span class="t" style="left:539.38px;top:161.94px;font-size:11px;line-height:14px;letter-spacing:0.062px;-webkit-text-stroke:0.18px currentColor;">1</span>
<span class="t" style="left:559.50px;top:161.94px;font-size:11px;line-height:14px;letter-spacing:0.062px;-webkit-text-stroke:0.18px currentColor;">120000</span>
<span class="t" style="left:659.25px;top:161.94px;font-size:11px;line-height:14px;letter-spacing:-0.151px;-webkit-text-stroke:0.18px currentColor;">Izba Celna w Szczecinie</span>
<span class="t" style="left:840.60px;top:161.94px;font-size:11px;line-height:14px;letter-spacing:-0.073px;-webkit-text-stroke:0.18px currentColor;">2021-06-25</span>
<span class="t" style="left:944.30px;top:161.94px;font-size:11px;line-height:14px;letter-spacing:-0.033px;-webkit-text-stroke:0.18px currentColor;">Warszawa</span>
<span class="t" style="left:43.75px;top:268.69px;font-size:11px;line-height:14px;font-weight:700;letter-spacing:-0.267px;">Pozycje deklaracji Intrastat</span>
<span class="t" style="left:206.25px;top:268.69px;font-size:11px;line-height:14px;color:#666;letter-spacing:-0.004px;-webkit-text-stroke:0.18px currentColor;">Przeglądarka linijek dowodów dla deklaracji</span>
<span class="t" style="left:28.25px;top:299.19px;font-size:11px;line-height:14px;letter-spacing:-0.191px;-webkit-text-stroke:0.18px currentColor;">Nowy</span>
<span class="t" style="left:102.50px;top:299.19px;font-size:11px;line-height:14px;letter-spacing:-0.38px;-webkit-text-stroke:0.18px currentColor;">Edycja</span>
<span class="t" style="left:285.60px;top:299.19px;font-size:11px;line-height:14px;letter-spacing:-0.182px;-webkit-text-stroke:0.18px currentColor;">Procedury</span>
<span class="t" style="left:995.00px;top:299.79px;font-size:11px;line-height:14px;letter-spacing:-0.096px;-webkit-text-stroke:0.18px currentColor;">Podgląd</span>
<span class="t" style="left:31.00px;top:325.94px;font-size:11px;line-height:14px;letter-spacing:-0.062px;-webkit-text-stroke:0.26px currentColor;">Lp</span>
<span class="t" style="left:71.00px;top:325.94px;font-size:11px;line-height:14px;letter-spacing:0.169px;-webkit-text-stroke:0.26px currentColor;">Towar</span>
<span class="t" style="left:71.00px;top:345.19px;font-size:11px;line-height:14px;letter-spacing:-0.098px;-webkit-text-stroke:0.26px currentColor;">Opis</span>
<span class="t" style="left:293.25px;top:345.19px;font-size:11px;line-height:14px;letter-spacing:-0.109px;-webkit-text-stroke:0.26px currentColor;">Kod</span>
<span class="t" style="left:355.50px;top:325.94px;font-size:11px;line-height:14px;letter-spacing:0.042px;-webkit-text-stroke:0.26px currentColor;">Kontrahent</span>
<span class="t" style="left:452.00px;top:325.94px;font-size:11px;line-height:14px;letter-spacing:0.025px;-webkit-text-stroke:0.26px currentColor;">Warunki</span>
<span class="t" style="left:452.00px;top:345.19px;font-size:11px;line-height:14px;letter-spacing:0.127px;-webkit-text-stroke:0.26px currentColor;">dostawy</span>
<span class="t" style="left:512.00px;top:325.94px;font-size:11px;line-height:14px;letter-spacing:-0.055px;-webkit-text-stroke:0.26px currentColor;">Kraj</span>
<span class="t" style="left:512.00px;top:345.19px;font-size:11px;line-height:14px;letter-spacing:-0.057px;-webkit-text-stroke:0.26px currentColor;">Przez.</span>
<span class="t" style="left:552.50px;top:345.19px;font-size:11px;line-height:14px;letter-spacing:-0.006px;-webkit-text-stroke:0.26px currentColor;">Poch.</span>
<span class="t" style="left:592.50px;top:325.94px;font-size:11px;line-height:14px;letter-spacing:0.059px;-webkit-text-stroke:0.26px currentColor;">Masa</span>
<span class="t" style="left:592.50px;top:345.19px;font-size:11px;line-height:14px;letter-spacing:0.169px;-webkit-text-stroke:0.26px currentColor;">Netto</span>
<span class="t" style="left:635.40px;top:325.94px;font-size:11px;line-height:14px;letter-spacing:0.191px;-webkit-text-stroke:0.26px currentColor;">Ilość</span>
<span class="t" style="left:635.40px;top:345.19px;font-size:11px;line-height:14px;letter-spacing:0.018px;-webkit-text-stroke:0.26px currentColor;">Uzupełniająca</span>
<span class="t" style="left:722.40px;top:325.94px;font-size:11px;line-height:14px;letter-spacing:0.121px;-webkit-text-stroke:0.26px currentColor;">Wartość</span>
<span class="t" style="left:722.40px;top:345.19px;font-size:11px;line-height:14px;letter-spacing:0.002px;-webkit-text-stroke:0.26px currentColor;">Faktury</span>
<span class="t" style="left:778.00px;top:345.19px;font-size:11px;line-height:14px;letter-spacing:0.077px;-webkit-text-stroke:0.26px currentColor;">Statystyczna</span>
<span class="t" style="left:54.77px;top:366.94px;font-size:11px;line-height:14px;letter-spacing:0.062px;-webkit-text-stroke:0.18px currentColor;">1</span>
<span class="t" style="left:74.50px;top:366.94px;font-size:11px;line-height:14px;letter-spacing:-0.092px;-webkit-text-stroke:0.18px currentColor;">Towar handlowy VAT = 0% z cechami 003</span>
<span class="t" style="left:296.25px;top:366.94px;font-size:11px;line-height:14px;letter-spacing:0.064px;-webkit-text-stroke:0.18px currentColor;">15180031</span>
<span class="t" style="left:358.25px;top:366.94px;font-size:11px;line-height:14px;letter-spacing:-0.193px;-webkit-text-stroke:0.18px currentColor;">DE077-34-01-110</span>
<span class="t" style="left:455.00px;top:366.94px;font-size:11px;line-height:14px;letter-spacing:-0.859px;-webkit-text-stroke:0.18px currentColor;">CFR</span>
<span class="t" style="left:515.00px;top:366.94px;font-size:11px;line-height:14px;letter-spacing:-0.898px;-webkit-text-stroke:0.18px currentColor;">DE</span>
<span class="t" style="left:555.60px;top:366.94px;font-size:11px;line-height:14px;letter-spacing:-0.297px;-webkit-text-stroke:0.18px currentColor;">PL</span>
<span class="t" style="left:619.88px;top:366.94px;font-size:11px;line-height:14px;letter-spacing:0.062px;-webkit-text-stroke:0.18px currentColor;">4</span>
<span class="t" style="left:749.82px;top:366.94px;font-size:11px;line-height:14px;letter-spacing:0.062px;-webkit-text-stroke:0.18px currentColor;">240</span>
<span class="t" style="left:832.12px;top:366.94px;font-size:11px;line-height:14px;letter-spacing:0.062px;-webkit-text-stroke:0.18px currentColor;">240</span>
<span class="t" style="left:54.77px;top:386.94px;font-size:11px;line-height:14px;letter-spacing:0.062px;-webkit-text-stroke:0.18px currentColor;">2</span>
<span class="t" style="left:74.50px;top:386.94px;font-size:11px;line-height:14px;letter-spacing:-0.092px;-webkit-text-stroke:0.18px currentColor;">Towar handlowy VAT = 0% z cechami 001</span>
<span class="t" style="left:296.25px;top:386.94px;font-size:11px;line-height:14px;letter-spacing:0.27px;-webkit-text-stroke:0.18px currentColor;">4811</span>
<span class="t" style="left:358.25px;top:386.94px;font-size:11px;line-height:14px;letter-spacing:-0.193px;-webkit-text-stroke:0.18px currentColor;">DE077-34-01-110</span>
<span class="t" style="left:455.00px;top:386.94px;font-size:11px;line-height:14px;letter-spacing:-0.859px;-webkit-text-stroke:0.18px currentColor;">CFR</span>
<span class="t" style="left:515.00px;top:386.94px;font-size:11px;line-height:14px;letter-spacing:-0.898px;-webkit-text-stroke:0.18px currentColor;">DE</span>
<span class="t" style="left:555.60px;top:386.94px;font-size:11px;line-height:14px;letter-spacing:-0.297px;-webkit-text-stroke:0.18px currentColor;">PL</span>
<span class="t" style="left:619.88px;top:386.94px;font-size:11px;line-height:14px;letter-spacing:0.062px;-webkit-text-stroke:0.18px currentColor;">2</span>
<span class="t" style="left:749.82px;top:386.94px;font-size:11px;line-height:14px;letter-spacing:0.062px;-webkit-text-stroke:0.18px currentColor;">150</span>
<span class="t" style="left:832.12px;top:386.94px;font-size:11px;line-height:14px;letter-spacing:0.062px;-webkit-text-stroke:0.18px currentColor;">150</span>
<span class="t" style="left:54.77px;top:406.94px;font-size:11px;line-height:14px;letter-spacing:0.062px;-webkit-text-stroke:0.18px currentColor;">3</span>
<span class="t" style="left:74.50px;top:406.94px;font-size:11px;line-height:14px;letter-spacing:-0.092px;-webkit-text-stroke:0.18px currentColor;">Towar handlowy VAT = 0% z cechami 002</span>
<span class="t" style="left:296.25px;top:406.94px;font-size:11px;line-height:14px;letter-spacing:0.064px;-webkit-text-stroke:0.18px currentColor;">82071910</span>
<span class="t" style="left:358.25px;top:406.94px;font-size:11px;line-height:14px;letter-spacing:-0.193px;-webkit-text-stroke:0.18px currentColor;">DE077-34-01-110</span>
<span class="t" style="left:455.00px;top:406.94px;font-size:11px;line-height:14px;letter-spacing:-0.859px;-webkit-text-stroke:0.18px currentColor;">CFR</span>
<span class="t" style="left:515.00px;top:406.94px;font-size:11px;line-height:14px;letter-spacing:-0.898px;-webkit-text-stroke:0.18px currentColor;">DE</span>
<span class="t" style="left:555.60px;top:406.94px;font-size:11px;line-height:14px;letter-spacing:-0.297px;-webkit-text-stroke:0.18px currentColor;">PL</span>
<span class="t" style="left:619.88px;top:406.94px;font-size:11px;line-height:14px;letter-spacing:0.062px;-webkit-text-stroke:0.18px currentColor;">6</span>
<span class="t" style="left:749.82px;top:406.94px;font-size:11px;line-height:14px;letter-spacing:0.062px;-webkit-text-stroke:0.18px currentColor;">385</span>
<span class="t" style="left:832.12px;top:406.94px;font-size:11px;line-height:14px;letter-spacing:0.062px;-webkit-text-stroke:0.18px currentColor;">385</span>
<span class="t" style="left:906.65px;top:364.99px;font-size:11px;line-height:14px;letter-spacing:0.055px;-webkit-text-stroke:0.42px currentColor;">Rodzaj transakcji</span>
<span class="t" style="left:968.97px;top:378.59px;font-size:11px;line-height:14px;letter-spacing:-0.098px;-webkit-text-stroke:0.42px currentColor;">Opis</span>
<span class="t" style="left:1001.70px;top:364.99px;font-size:11px;line-height:14px;color:#3a3a3a;letter-spacing:-0.034px;-webkit-text-stroke:0.18px currentColor;">Kupno/sprzedaż za</span>
<span class="t" style="left:1001.70px;top:378.59px;font-size:11px;line-height:14px;color:#3a3a3a;letter-spacing:0.098px;-webkit-text-stroke:0.18px currentColor;">zapłatą</span>
<span class="t" style="left:903.59px;top:398.89px;font-size:11px;line-height:14px;letter-spacing:0.055px;-webkit-text-stroke:0.42px currentColor;">Rodzaj transportu</span>
<span class="t" style="left:1001.70px;top:398.89px;font-size:11px;line-height:14px;color:#3a3a3a;letter-spacing:0.062px;-webkit-text-stroke:0.18px currentColor;">3</span>
<span class="t" style="left:903.59px;top:418.99px;font-size:11px;line-height:14px;letter-spacing:0.055px;-webkit-text-stroke:0.42px currentColor;">Rodzaj transportu</span>
<span class="t" style="left:968.97px;top:431.79px;font-size:11px;line-height:14px;letter-spacing:-0.098px;-webkit-text-stroke:0.42px currentColor;">Opis</span>
<span class="t" style="left:1001.70px;top:418.99px;font-size:11px;line-height:14px;color:#3a3a3a;letter-spacing:0.052px;-webkit-text-stroke:0.18px currentColor;">Transport drogowy</span>
<span class="t" style="left:906.65px;top:451.59px;font-size:11px;line-height:14px;letter-spacing:0.055px;-webkit-text-stroke:0.42px currentColor;">Rodzaj transakcji</span>
<span class="t" style="left:1001.70px;top:451.59px;font-size:11px;line-height:14px;color:#3a3a3a;letter-spacing:0.477px;-webkit-text-stroke:0.18px currentColor;">11</span>
</div>
</body></html>
